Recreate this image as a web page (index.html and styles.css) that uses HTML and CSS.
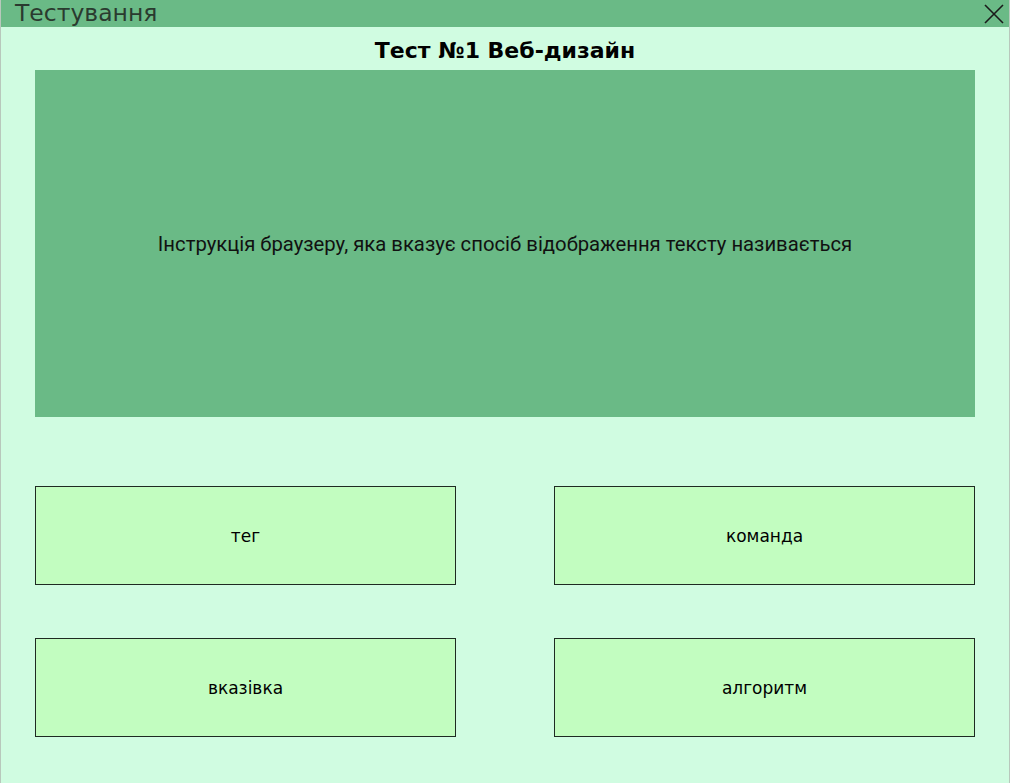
FILE: index.html
```html
<!DOCTYPE html>
<html lang="uk">
<head>
<meta charset="utf-8">
<title>Тестування</title>
<link rel="stylesheet" href="styles.css">
</head>
<body>
<div class="window">
  <div class="titlebar">
    <span class="title">Тестування</span>
    <span class="close" aria-label="Закрити">
      <svg width="22" height="22" viewBox="0 0 22 22"><path d="M2 2 L20 20 M20 2 L2 20" stroke="#1a1a1a" stroke-width="1.6" fill="none"/></svg>
    </span>
  </div>
  <div class="content">
    <h1 class="heading">Тест №1 Веб-дизайн</h1>
    <div class="question">Інструкція браузеру, яка вказує спосіб відображення тексту називається</div>
    <div class="answers">
      <button class="answer">тег</button>
      <button class="answer">команда</button>
      <button class="answer">вказівка</button>
      <button class="answer">алгоритм</button>
    </div>
  </div>
</div>
</body>
</html>
```

FILE: styles.css
```css
html, body {
  margin: 0;
  padding: 0;
}
body {
  width: 1010px;
  height: 783px;
  overflow: hidden;
  font-family: "Liberation Sans", Arial, sans-serif;
  background: #d0fce1;
}
.window {
  width: 1010px;
  height: 783px;
  box-sizing: border-box;
  border-left: 1px solid #b8c8bc;
  border-right: 1px solid #b8c8bc;
  display: flex;
  flex-direction: column;
}
.titlebar {
  height: 27px;
  background: #6aba86;
  display: flex;
  align-items: center;
  justify-content: space-between;
  padding: 0 4px 0 14px;
}
.title {
  font-family: "DejaVu Sans", sans-serif;
  font-size: 23.5px;
  color: #2a3a2f;
  line-height: 27px;
}
.close {
  display: flex;
  width: 22px;
  height: 22px;
}
.content {
  flex: 1;
  padding: 0 34px;
  display: flex;
  flex-direction: column;
}
.heading {
  margin: 0;
  height: 43px;
  line-height: 47px;
  font-family: "DejaVu Sans", sans-serif;
  font-size: 22px;
  font-weight: bold;
  text-align: center;
  color: #000;
}
.question {
  height: 347px;
  background: #6aba86;
  display: flex;
  align-items: center;
  justify-content: center;
  font-family: Roboto, sans-serif;
  font-size: 20.3px;
  color: #111;
  box-sizing: border-box;
}
.answers {
  margin-top: 69px;
  display: grid;
  grid-template-columns: 421px 421px;
  justify-content: space-between;
  row-gap: 53px;
}
.answer {
  height: 99px;
  background: #c2fdc0;
  border: 1px solid #1e2a22;
  font-family: "DejaVu Sans", sans-serif;
  font-size: 17px;
  color: #000;
  padding: 0;
}
```
